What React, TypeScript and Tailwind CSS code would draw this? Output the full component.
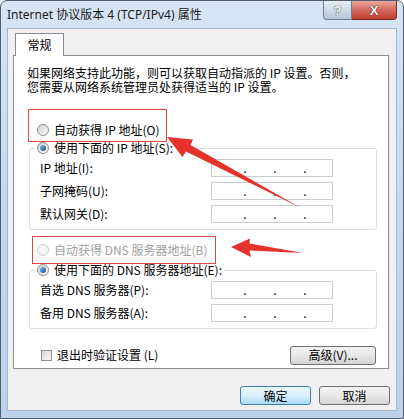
import React from "react";

function Radio({ checked = false, disabled = false }: { checked?: boolean; disabled?: boolean }) {
  return (
    <span
      className={
        disabled
          ? "inline-flex h-[12px] w-[12px] shrink-0 items-center justify-center rounded-full border border-[#cfcfcf] bg-[#f4f4f4]"
          : "inline-flex h-[12px] w-[12px] shrink-0 items-center justify-center rounded-full border border-[#8c8c8c] bg-linear-to-br from-[#d2d2d2] to-[#fbfbfb]"
      }
    >
      {checked && <span className="h-[6px] w-[6px] rounded-full bg-linear-to-br from-[#86bbe8] to-[#124c8a]" />}
    </span>
  );
}

function IpInput() {
  return (
    <div className="flex h-[18px] w-[122px] items-center border border-[#c9ced5] bg-white pl-[18px]">
      {[0, 1, 2].map((i) => (
        <span key={i} className="w-[30px] text-center leading-[16px]">
          .
        </span>
      ))}
    </div>
  );
}

function Row({ label }: { label: string }) {
  return (
    <div className="flex h-[18px] items-center pl-[5px]">
      <span className="w-[171px] leading-[16px]">{label}</span>
      <IpInput />
    </div>
  );
}

function WinButton({ children, primary = false, w }: { children: React.ReactNode; primary?: boolean; w: string }) {
  return (
    <div
      className={
        (primary
          ? "border-[#3c7fb1] bg-linear-to-b from-[#eaf6fd] via-[#d9f0fc] to-[#a7d9f5] "
          : "border-[#707070] bg-linear-to-b from-[#f2f2f2] via-[#e8e8e8] to-[#d3d3d3] ") +
        w +
        " flex h-[19px] items-center justify-center rounded-[3px] border leading-[16px]"
      }
    >
      {children}
    </div>
  );
}

export default function App() {
  return (
    <div className="relative flex h-[419px] w-[404px] flex-col overflow-hidden rounded-t-[7px] border border-[#4f5d6e] bg-linear-to-b from-[#d6e5f5] via-[#c4d8ee] to-[#bcd2ea] font-['Noto_Sans_CJK_SC',sans-serif] text-[12px] text-black">
      {/* Title bar */}
      <div className="flex h-[27px] shrink-0 items-start">
        <div className="self-center pl-[6px] font-['Noto_Sans','Noto_Sans_CJK_SC',sans-serif] text-[12px] leading-[16px] text-[#1a1a1a]">
          Internet 协议版本 4 (TCP/IPv4) 属性
        </div>
        <div className="ml-auto mr-[6px] flex">
          <div className="flex h-[19px] w-[29px] items-center justify-center rounded-bl-[4px] border border-t-0 border-[#6c7e95] bg-linear-to-b from-[#e6edf5] to-[#b5c6d9] font-['Liberation_Sans',sans-serif] text-[13px] font-bold leading-none text-white [text-shadow:0_0_1px_#2a3440,0_0_1px_#2a3440]">
            ?
          </div>
          <div className="flex h-[19px] w-[45px] items-center justify-center rounded-br-[4px] border border-l-0 border-t-0 border-[#7a2a1f] bg-linear-to-b from-[#e9aa9e] via-[#d2675b] to-[#c2402f] font-['Liberation_Sans',sans-serif] text-[13px] font-bold leading-none text-white [text-shadow:0_0_1px_#3a0a05,0_0_1px_#3a0a05]">
            X
          </div>
        </div>
      </div>

      {/* Client area */}
      <div className="mx-[6px] flex h-[383px] shrink-0 flex-col border border-[#a3b8d0] bg-[#f0f0f0]">
        {/* Tab */}
        <div className="relative z-10 -mb-[1px] ml-[7px] mt-[4px] flex h-[23px] w-[49px] items-center justify-center border border-b-0 border-[#898c95] bg-white leading-[16px]">
          常规
        </div>
        {/* Panel */}
        <div className="relative ml-[5px] flex h-[314px] w-[376px] flex-col border border-[#898c95] bg-white">
          <div className="flex flex-col gap-[1px] pl-[13px] pt-[10px] leading-[13px]">
            <div>如果网络支持此功能，则可以获取自动指派的 IP 设置。否则，</div>
            <div>您需要从网络系统管理员处获得适当的 IP 设置。</div>
          </div>

          <div className="mt-[29px] flex h-[16px] items-center gap-[5px] pl-[23px] leading-[16px]">
            <Radio />
            <span>自动获得 IP 地址(O)</span>
          </div>

          <fieldset className="ml-[15px] mt-[2px] w-[348px] rounded-[3px] border border-[#d5dfe5] px-[5px] pb-[6px]">
            <legend className="flex h-[16px] items-center gap-[5px] bg-white px-[2px] pr-[3px] leading-[16px]">
              <Radio checked />
              <span>使用下面的 IP 地址(S):</span>
            </legend>
            <div className="flex flex-col gap-[5px] pt-[3px]">
              <Row label="IP 地址(I):" />
              <Row label="子网掩码(U):" />
              <Row label="默认网关(D):" />
            </div>
          </fieldset>

          <div className="mt-[12px] flex h-[16px] items-center gap-[5px] pl-[23px] leading-[16px] text-[#a0a0a0]">
            <Radio disabled />
            <span>自动获得 DNS 服务器地址(B)</span>
          </div>

          <fieldset className="ml-[15px] mt-[4px] w-[348px] rounded-[3px] border border-[#d5dfe5] px-[5px] pb-[6px]">
            <legend className="flex h-[16px] items-center gap-[5px] bg-white px-[2px] pr-[3px] leading-[16px]">
              <Radio checked />
              <span>使用下面的 DNS 服务器地址(E):</span>
            </legend>
            <div className="flex flex-col gap-[5px] pt-[3px]">
              <Row label="首选 DNS 服务器(P):" />
              <Row label="备用 DNS 服务器(A):" />
            </div>
          </fieldset>

          <div className="mt-[17px] flex h-[18px] items-center justify-between pl-[27px] pr-[12px]">
            <div className="flex items-center gap-[5px] leading-[16px]">
              <span className="h-[11px] w-[11px] border border-[#8e8f8f] bg-linear-to-br from-[#d8d8d8] to-[#f6f6f6]" />
              <span>退出时验证设置 (L)</span>
            </div>
            <WinButton w="w-[86px]">高级(V)...</WinButton>
          </div>

          {/* Annotation boxes */}
          <div className="pointer-events-none absolute left-[14px] top-[53px] h-[33px] w-[139px] border border-[#e04444]" />
          <div className="pointer-events-none absolute left-[18px] top-[180px] h-[28px] w-[184px] border border-[#e04444]" />
        </div>

        <div className="mt-[17px] flex justify-end gap-[8px] pr-[6px]">
          <WinButton primary w="w-[71px]">
            确定
          </WinButton>
          <WinButton w="w-[71px]">取消</WinButton>
        </div>
      </div>

      {/* Annotation arrows */}
      <svg className="pointer-events-none absolute left-[-1px] top-[-1px]" width="404" height="419" viewBox="0 0 404 419">
        <polygon points="167,137 193,139.5 190.5,145 301,208 186,151.5 182.5,157" fill="#e5322b" />
        <polygon points="231,247 250,238.5 249.5,243.5 303,253 249.5,250.5 251,257" fill="#e5322b" />
      </svg>
    </div>
  );
}
